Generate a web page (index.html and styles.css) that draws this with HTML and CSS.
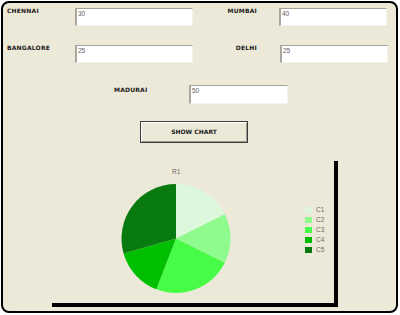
FILE: index.html
```html
<!DOCTYPE html>
<html>
<head>
<meta charset="utf-8">
<link rel="stylesheet" href="styles.css">
</head>
<body>
<div class="frame">
  <div class="row r1">
    <div class="lbl lbl-left">CHENNAI</div>
    <div class="field w118">30</div>
    <div class="lbl lbl-right">MUMBAI</div>
    <div class="field w108">40</div>
  </div>
  <div class="row r2">
    <div class="lbl lbl-left">BANGALORE</div>
    <div class="field w118">25</div>
    <div class="lbl lbl-right">DELHI</div>
    <div class="field w108 shift">25</div>
  </div>
  <div class="row r3">
    <div class="lbl lbl-mid">MADURAI</div>
    <div class="field w99">50</div>
  </div>
  <button class="btn">SHOW CHART</button>
  <div class="chart">
    <svg width="282" height="142" viewBox="0 0 282 142">
      <text x="120" y="13" class="ctext">R1</text>
      <path d="M124,77.5 L124,23 A54.5,54.5 0 0 1 172.79,53.21 Z" fill="#dcf7dc"/>
      <path d="M124,77.5 L172.79,53.21 A54.5,54.5 0 0 1 172.79,101.79 Z" fill="#8ffb8f"/>
      <path d="M124,77.5 L172.79,101.79 A54.5,54.5 0 0 1 104.31,128.32 Z" fill="#46fc46"/>
      <path d="M124,77.5 L104.31,128.32 A54.5,54.5 0 0 1 71.58,92.41 Z" fill="#00be00"/>
      <path d="M124,77.5 L71.58,92.41 A54.5,54.5 0 0 1 124,23 Z" fill="#087a10"/>
      <rect x="253" y="46" width="7" height="6" fill="#dcf7dc"/>
      <rect x="253" y="56" width="7" height="6" fill="#8ffb8f"/>
      <rect x="253" y="66" width="7" height="6" fill="#46fc46"/>
      <rect x="253" y="76" width="7" height="6" fill="#00be00"/>
      <rect x="253" y="86" width="7" height="6" fill="#087a10"/>
      <text x="264" y="50.8" class="ctext">C1</text>
      <text x="264" y="60.8" class="ctext">C2</text>
      <text x="264" y="70.8" class="ctext">C3</text>
      <text x="264" y="80.8" class="ctext">C4</text>
      <text x="264" y="90.8" class="ctext">C5</text>
    </svg>
  </div>
</div>
</body>
</html>
```
FILE: styles.css
```css
html, body {
  margin: 0;
  padding: 0;
  background: #ffffff;
}
.frame {
  margin: 1px;
  width: 397px;
  height: 312px;
  box-sizing: border-box;
  border: 2px solid #000;
  border-radius: 8px;
  background: #ece9d8;
  padding: 5px 0 0 4px;
  display: flex;
  flex-direction: column;
  align-items: flex-start;
}
.row {
  display: flex;
  align-items: flex-start;
}
.r2 { margin-top: 19px; }
.r3 { margin-top: 22px; padding-left: 107px; }
.lbl {
  font-family: "DejaVu Sans", sans-serif;
  font-weight: bold;
  font-size: 6px;
  letter-spacing: 0.2px;
  line-height: 8px;
  color: #1a1a1a;
  margin-top: -1px;
}
.lbl-left { width: 68px; }
.lbl-right { width: 64px; text-align: right; margin-right: 22px; }
.lbl-mid { width: 75px; margin-top: 0.5px; }
.field {
  height: 18px;
  box-sizing: border-box;
  background: #ffffff;
  border-style: solid;
  border-width: 1px 1px 1px 2px;
  border-color: #a3a29c #f4f3ee #f4f3ee #a8a7a0;
  font-family: "Liberation Sans", sans-serif;
  font-size: 6.5px;
  line-height: 8px;
  color: #606060;
  padding: 1px 0 0 1px;
}
.w118 { width: 118px; }
.w108 { width: 108px; }
.w99 { width: 99px; height: 19px; }
.shift { margin-left: 1px; }
.btn {
  margin: 17px 0 0 133px;
  width: 108px;
  height: 22px;
  box-sizing: border-box;
  padding: 0;
  background: #ece9d8;
  border: 1px solid #3c3c3c;
  box-shadow: inset 1px 1px 0 #ffffff, inset -1px -1px 0 #9d9a8c;
  font-family: "DejaVu Sans", sans-serif;
  font-weight: bold;
  font-size: 6px;
  color: #1a1a1a;
  line-height: 8px;
}
.chart {
  margin: 18px 0 0 45px;
  width: 286px;
  height: 146px;
  box-sizing: border-box;
  border-right: 4px solid #000;
  border-bottom: 4px solid #000;
}
.chart svg { display: block; }
.ctext {
  font-family: "Liberation Sans", sans-serif;
  font-size: 6.5px;
  fill: #6a6a6a;
}
```
